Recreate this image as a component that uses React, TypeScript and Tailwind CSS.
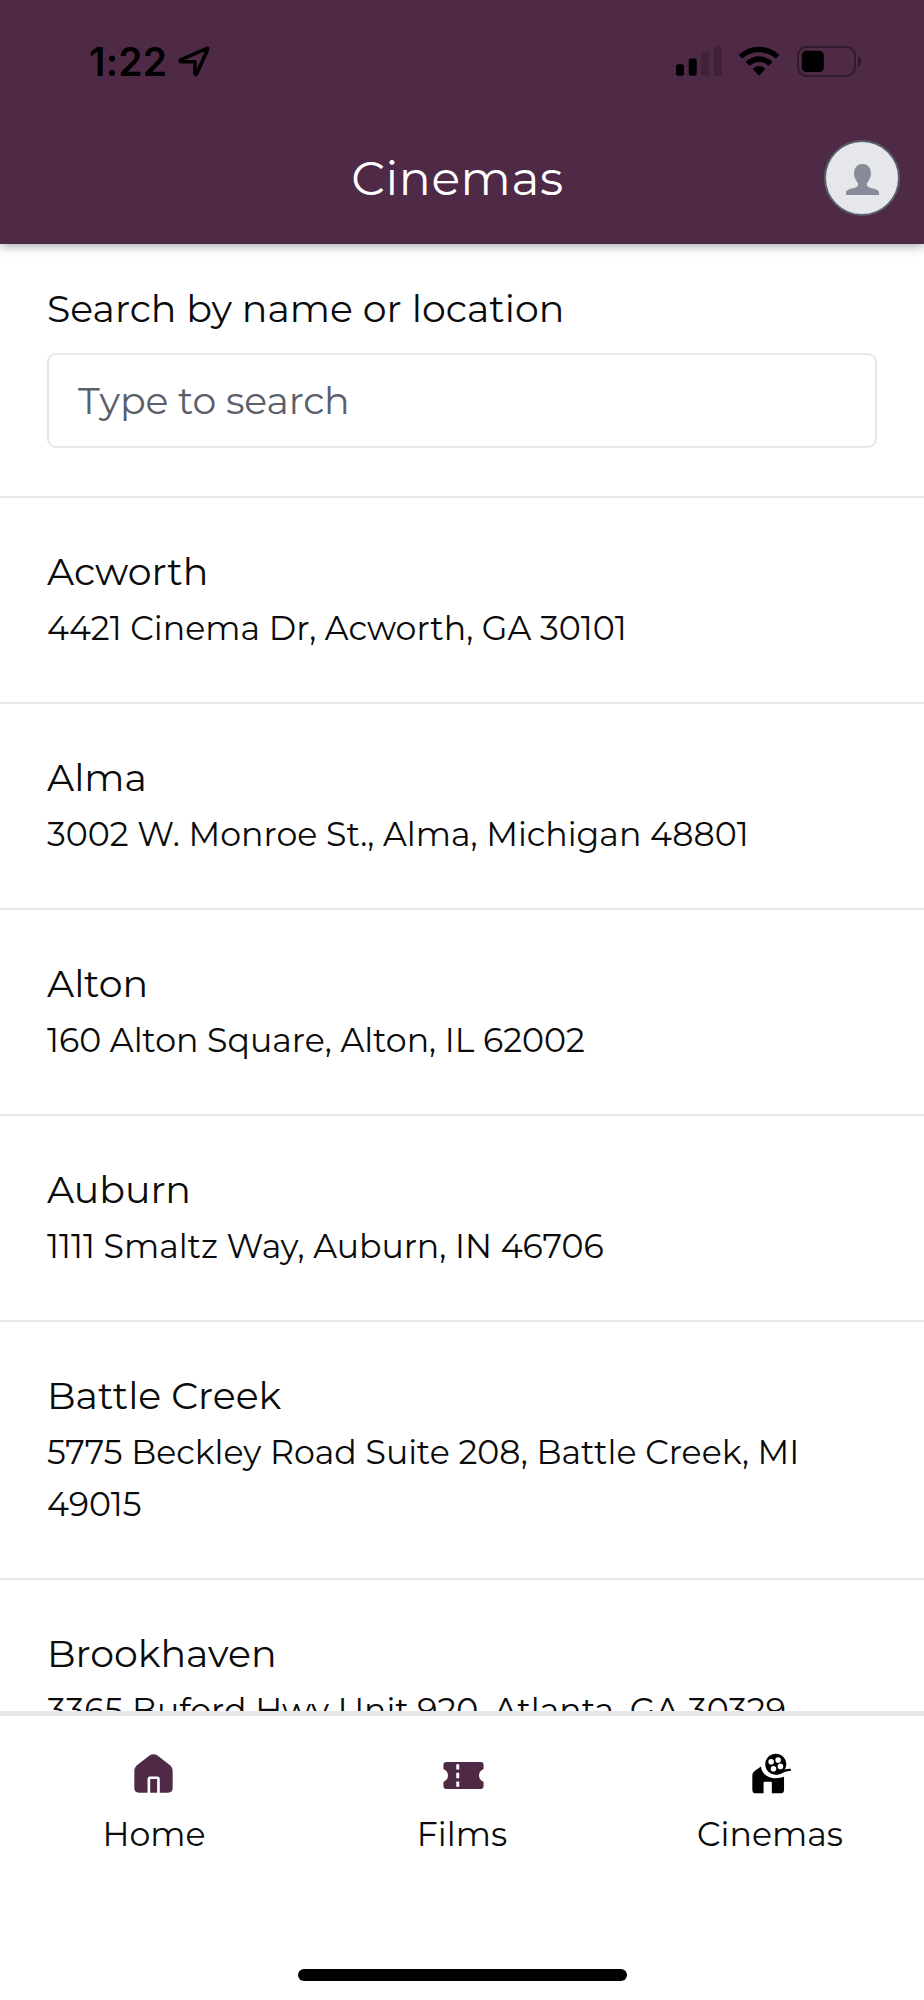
import React from "react";

type Cinema = { name: string; address: string };

const cinemas: Cinema[] = [
  { name: "Acworth", address: "4421 Cinema Dr, Acworth, GA 30101" },
  { name: "Alma", address: "3002 W. Monroe St., Alma, Michigan 48801" },
  { name: "Alton", address: "160 Alton Square, Alton, IL 62002" },
  { name: "Auburn", address: "1111 Smaltz Way, Auburn, IN 46706" },
  { name: "Battle Creek", address: "5775 Beckley Road Suite 208, Battle Creek, MI 49015" },
  { name: "Brookhaven", address: "3365 Buford Hwy Unit 920, Atlanta, GA 30329" },
];

function LocationIcon() {
  return (
    <svg className="h-[31px] w-[32px]" viewBox="0 0 96 93" fill="none" stroke="black" strokeWidth="10.5" strokeLinejoin="round">
      <path d="M87 7 L7 42 Q5 46 9 47 H49 Q51 47 51 49 V83 Q53 88 56 84 L89 10 Q90 6 87 7Z" />
    </svg>
  );
}

function SignalIcon() {
  return (
    <svg className="h-[30px] w-[46px]" viewBox="0 0 46 30">
      <rect x="0" y="18.3" width="8" height="11.4" rx="2" />
      <rect x="12.7" y="12.6" width="8" height="17.1" rx="2" />
      <rect x="25.3" y="6.3" width="8" height="23.4" rx="2" fillOpacity="0.2" />
      <rect x="38" y="0.2" width="8" height="29.5" rx="2" fillOpacity="0.2" />
    </svg>
  );
}

function WifiIcon() {
  return (
    <svg className="h-[30px] w-[40px]" viewBox="0 0 120 90">
      <path d="M60 2 C83 2 104 11 119 25 Q121 27 119 29 L112 36 Q110 38 108 36 C95 25 78 19 60 19 C42 19 25 25 12 36 Q10 38 8 36 L1 29 Q-1 27 1 25 C16 11 37 2 60 2Z" />
      <path d="M60 31 C75 31 88 37 98 46 Q100 48 98 50 L90 58 Q88 60 86 58 C79 52 70 48 60 48 C50 48 41 52 34 58 Q32 60 30 58 L22 50 Q20 48 22 46 C32 37 45 31 60 31Z" />
      <path d="M60 60 C67 60 73 63 77 67 Q79 69 77 71 L62 87 Q60 89 58 87 L43 71 Q41 69 43 67 C47 63 53 60 60 60Z" />
    </svg>
  );
}

function BatteryIcon() {
  return (
    <svg className="h-[31px] w-[65px]" viewBox="0 0 65 31">
      <rect x="1" y="1" width="57" height="29" rx="8.5" fill="none" stroke="black" strokeOpacity="0.38" strokeWidth="2" />
      <rect x="4.8" y="4.8" width="22" height="21.2" rx="4.5" />
      <path d="M61 10.5 C65.6 12 65.6 19 61 20.5Z" fillOpacity="0.42" />
    </svg>
  );
}

function PersonIcon() {
  return (
    <svg className="h-[31px] w-[33px]" viewBox="0 0 98 92" fill="#878b98">
      <path d="M49 0 C63 0 74 10 74 27 C74 42 67 50 62 58 C60 65 65 69 74 71 C90 74 98 78 98 86 V92 H0 V86 C0 78 8 74 24 71 C33 69 38 65 36 58 C31 50 24 42 24 27 C24 10 35 0 49 0Z" />
    </svg>
  );
}

function HomeIcon() {
  return (
    <svg className="mr-[1px] h-[39px] w-[39px]" viewBox="0 0 118 118">
      <path fill="#4f2a47" d="M46 5 Q59 -3 72 5 L109 34 Q117 41 117 51 V103 Q117 117 103 117 H15 Q1 117 1 103 V51 Q1 41 9 34Z" />
      <path d="M45 118 V75 Q45 72 48 72 H71 Q74 72 74 75 V118" fill="none" stroke="white" strokeWidth="8" />
    </svg>
  );
}

function TicketIcon() {
  return (
    <svg className="mt-[4px] ml-[2px] h-[27px] w-[41px]" viewBox="0 0 122 82">
      <path fill="#4f2a47" d="M9 0 H113 Q122 0 122 9 V21 Q108 28 108 41 Q108 54 122 61 V73 Q122 82 113 82 H9 Q0 82 0 73 V61 Q14 54 14 41 Q14 28 0 21 V9 Q0 0 9 0Z" />
      <path fill="white" d="M39 7h9v16h-9z M39 33h9v16h-9z M39 59h9v16h-9z" />
    </svg>
  );
}

function CinemaIcon() {
  return (
    <svg className="ml-[3px] h-[41px] w-[39px]" viewBox="0 0 118 122">
      <path d="M27 40 L7 54 Q1 59 1 66 V110 Q1 121 12 121 H35 V89 Q35 86 38 86 H57 Q60 86 60 89 V121 H86 Q97 121 97 110 V71 C66 82 31 72 27 40Z" />
      <path
        fillRule="evenodd"
        d="M72 1 a32 32 0 1 0 0 64 a32 32 0 1 0 0 -64Z M58 17 a8.500 8.500 0 1 1 0 17 a8.500 8.500 0 1 1 0 -17Z M79 12 a8.500 8.500 0 1 1 0 17 a8.500 8.500 0 1 1 0 -17Z M86 31 a8.500 8.500 0 1 1 0 17 a8.500 8.500 0 1 1 0 -17Z M65 38 a8.500 8.500 0 1 1 0 17 a8.500 8.500 0 1 1 0 -17Z"
      />
      <path d="M72 61 Q87 61 98 53 Q106 50 115 50" fill="none" stroke="black" strokeWidth="7" strokeLinecap="round" />
    </svg>
  );
}

const tabs = [
  { label: "Home", icon: <HomeIcon /> },
  { label: "Films", icon: <TicketIcon /> },
  { label: "Cinemas", icon: <CinemaIcon /> },
];

export default function App() {
  return (
    <div className="flex h-[2000px] w-[924px] flex-col overflow-hidden bg-white font-['Montserrat','Inter',sans-serif] text-[#0b0b0c]">
      <header className="z-10 h-[244px] shrink-0 bg-[#4f2a47] shadow-[0_2px_10px_rgba(0,0,0,0.35)]">
        <div className="flex h-[122px] items-center justify-between pr-[62px] pl-[89px] text-black">
          <div className="flex items-center gap-[11px]">
            <span className="font-['Inter',sans-serif] text-[39px] leading-none font-semibold tracking-[0.2px]">1:22</span>
            <LocationIcon />
          </div>
          <div className="flex items-center">
            <SignalIcon />
            <div className="ml-[17px]"><WifiIcon /></div>
            <div className="ml-[18px]"><BatteryIcon /></div>
          </div>
        </div>
        <div className="grid h-[111px] grid-cols-[100px_1fr_100px] items-center pr-[24px] pl-[15px]">
          <h1 className="col-start-2 pt-[2px] text-center text-[47.4px] leading-none tracking-[0.6px] text-white">Cinemas</h1>
          <div className="flex size-[76px] items-center justify-center justify-self-end rounded-full border-2 border-[#59606c] bg-[#e5e7eb] pt-[4px]">
            <PersonIcon />
          </div>
        </div>
      </header>

      <main className="min-h-0 flex-1 overflow-hidden">
        <section className="h-[254px] border-b-2 border-[#e5e7eb] px-[47px] pt-[36px]">
          <label htmlFor="search" className="block text-[37.9px] leading-[57px]">Search by name or location</label>
          <input
            id="search"
            placeholder="Type to search"
            className="mt-[16px] block h-[95px] w-full rounded-[9px] border-2 border-[#e5e7eb] bg-white px-[29px] text-[37.9px] tracking-[-0.15px] outline-none placeholder:text-[#5b5e6b] placeholder:opacity-100"
          />
        </section>
        <ul>
          {cinemas.map((c) => (
            <li key={c.name} className="border-b-2 border-[#e5e7eb] px-[47px] pt-[45px] pb-[48px]">
              <h2 className="text-[37.9px] leading-[57px]">{c.name}</h2>
              <p className="mt-[2px] text-[33.2px] leading-[52px]">{c.address}</p>
            </li>
          ))}
        </ul>
      </main>

      <nav className="flex h-[289px] shrink-0 flex-col items-center border-t-[5px] border-[#e5e7eb] bg-white">
        <div className="grid w-full grid-cols-3 pt-[36px]">
          {tabs.map((t) => (
            <div key={t.label} className="flex flex-col items-center">
              <div className="flex h-[42px] items-center">{t.icon}</div>
              <span className="mt-[15px] text-[33.2px] leading-[50px]">{t.label}</span>
            </div>
          ))}
        </div>
        <div className="mt-auto mb-[19px] h-[12px] w-[329px] rounded-full bg-black" />
      </nav>
    </div>
  );
}
